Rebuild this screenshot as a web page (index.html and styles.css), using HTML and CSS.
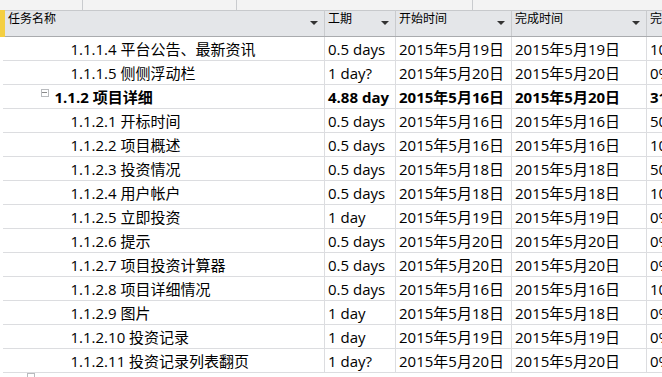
FILE: index.html
```html
<!DOCTYPE html>
<html lang="zh-CN">
<head>
    <meta charset="UTF-8">
    <title>任务列表</title>
    <link rel="stylesheet" href="styles.css">
</head>
<body>
    <div class="topbar">
        <div class="tb-cell" style="width: 83px"></div>
        <div class="tb-cell" style="width: 154px"></div>
        <div class="tb-cell" style="width: 236px"></div>
        <div class="tb-cell tb-last"></div>
    </div>

    <table class="grid">
        <colgroup>
            <col style="width: 322px">
            <col style="width: 71px">
            <col style="width: 116px">
            <col style="width: 135px">
            <col style="width: 40px">
        </colgroup>
        <thead>
            <tr>
                <th class="col-name"><div class="head"><span>任务名称</span><span class="arrow"></span></div></th>
                <th><div class="head"><span>工期</span><span class="arrow"></span></div></th>
                <th><div class="head"><span>开始时间</span><span class="arrow"></span></div></th>
                <th><div class="head"><span>完成时间</span><span class="arrow"></span></div></th>
                <th><div class="head"><span>完成百分比</span></div></th>
            </tr>
        </thead>
        <tbody>
            <tr><td class="lvl3">1.1.1.4 平台公告、最新资讯</td><td>0.5 days</td><td>2015年5月19日</td><td>2015年5月19日</td><td>100%</td></tr>
            <tr><td class="lvl3">1.1.1.5 侧侧浮动栏</td><td>1 day?</td><td>2015年5月20日</td><td>2015年5月20日</td><td>0%</td></tr>
            <tr class="summary"><td class="lvl2"><span class="toggle"></span>1.1.2 项目详细</td><td>4.88 day</td><td>2015年5月16日</td><td>2015年5月20日</td><td>31%</td></tr>
            <tr><td class="lvl3">1.1.2.1 开标时间</td><td>0.5 days</td><td>2015年5月16日</td><td>2015年5月16日</td><td>50%</td></tr>
            <tr><td class="lvl3">1.1.2.2 项目概述</td><td>0.5 days</td><td>2015年5月16日</td><td>2015年5月16日</td><td>100%</td></tr>
            <tr><td class="lvl3">1.1.2.3 投资情况</td><td>0.5 days</td><td>2015年5月18日</td><td>2015年5月18日</td><td>50%</td></tr>
            <tr><td class="lvl3">1.1.2.4 用户帐户</td><td>0.5 days</td><td>2015年5月18日</td><td>2015年5月18日</td><td>100%</td></tr>
            <tr><td class="lvl3">1.1.2.5 立即投资</td><td>1 day</td><td>2015年5月19日</td><td>2015年5月19日</td><td>0%</td></tr>
            <tr><td class="lvl3">1.1.2.6 提示</td><td>0.5 days</td><td>2015年5月20日</td><td>2015年5月20日</td><td>0%</td></tr>
            <tr><td class="lvl3">1.1.2.7 项目投资计算器</td><td>0.5 days</td><td>2015年5月20日</td><td>2015年5月20日</td><td>0%</td></tr>
            <tr><td class="lvl3">1.1.2.8 项目详细情况</td><td>0.5 days</td><td>2015年5月16日</td><td>2015年5月16日</td><td>100%</td></tr>
            <tr><td class="lvl3">1.1.2.9 图片</td><td>1 day</td><td>2015年5月18日</td><td>2015年5月18日</td><td>0%</td></tr>
            <tr><td class="lvl3">1.1.2.10 投资记录</td><td>1 day</td><td>2015年5月19日</td><td>2015年5月19日</td><td>0%</td></tr>
            <tr><td class="lvl3">1.1.2.11 投资记录列表翻页</td><td>1 day?</td><td>2015年5月20日</td><td>2015年5月20日</td><td>0%</td></tr>
        </tbody>
    </table>
    <div class="bottom">
        <span class="box"></span>
    </div>
</body>
</html>
```

FILE: styles.css
```css
/* General */
* {
    margin: 0;
    padding: 0;
    box-sizing: border-box;
}
html, body {
    width: 662px;
    height: 377px;
    overflow: hidden;
    background-color: #ffffff;
    font-family: "Open Sans", "Noto Sans CJK SC", sans-serif;
    color: #000000;
}

/* Top strip (timescale) */
.topbar {
    display: flex;
    height: 10px;
    background-color: #f3f3f3;
}
.tb-cell {
    border-right: 1px solid #c9cbce;
}
.tb-last {
    flex: 1;
    border-right: none;
}

/* Grid */
.grid {
    table-layout: fixed;
    border-collapse: collapse;
    width: 684px;
}
.grid th {
    height: 26px;
    background-color: #e4e6e9;
    border-top: 1px solid #c7c9cc;
    border-bottom: 1px solid #a9abae;
    border-right: 1px solid #c9cbce;
    font-size: 12px;
    font-weight: normal;
    text-align: left;
    vertical-align: top;
    white-space: nowrap;
    overflow: hidden;
}
.grid th.col-name {
    border-left: 5px solid #f4cf42;
}
.head {
    display: flex;
    justify-content: space-between;
    padding: 0 6px 0 3px;
    line-height: 16px;
}
.arrow {
    width: 0;
    height: 0;
    margin-top: 10px;
    border-left: 4px solid transparent;
    border-right: 4px solid transparent;
    border-top: 4px solid #333333;
}

.grid td {
    height: 24px;
    padding: 0 3px;
    font-size: 15px;
    line-height: 22px;
    border-bottom: 1px solid #dcdde0;
    border-right: 1px solid #dcdde0;
    white-space: nowrap;
    overflow: hidden;
}
.grid td.lvl3 {
    padding-left: 68px;
}
.grid td.lvl2 {
    padding-left: 38px;
}
.summary td {
    font-weight: bold;
}

/* Collapse toggle */
.toggle {
    display: inline-block;
    width: 8px;
    height: 8px;
    margin-right: 6px;
    position: relative;
    top: -6px;
    border: 1px solid #b9bbbe;
    background: linear-gradient(#8a8a8a, #8a8a8a) center / 5px 1px no-repeat;
}

/* Bottom strip */
.bottom {
    height: 5px;
    padding-left: 27px;
}
.box {
    display: block;
    width: 8px;
    height: 5px;
    border: 1px solid #b9bbbe;
    border-bottom: none;
}
```
